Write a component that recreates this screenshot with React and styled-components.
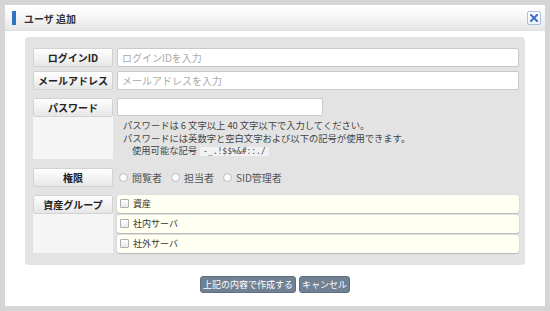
import React from "react";
import styled, { createGlobalStyle } from "styled-components";

const Global = createGlobalStyle`
  html, body { margin: 0; padding: 0; }
  body {
    background: #d5d5d5;
    font-family: "Noto Sans CJK JP", "Noto Sans", sans-serif;
    color: #333;
  }
`;

const Page = styled.div`
  padding: 5px 5px 0 5px;
  height: 311px;
  box-sizing: border-box;
`;

const Dialog = styled.div`
  background: #fff;
  height: 301px;
  display: flex;
  flex-direction: column;
  box-sizing: border-box;
`;

const Header = styled.div`
  height: 24px;
  margin-top: 1px;
  display: flex;
  align-items: center;
  padding: 0 4px 0 7px;
  background: linear-gradient(#ffffff 0%, #f6f6f6 45%, #e6e6e6 100%);
  border-bottom: 1px solid #e0e0e0;
`;

const TitleBar = styled.span`
  width: 4px;
  height: 14px;
  background: #2f74c0;
  margin-right: 8px;
`;

const Title = styled.span`
  font-size: 10px;
  font-weight: bold;
  color: #333;
  flex: 1;
`;

const CloseBtn = styled.button`
  width: 14px;
  height: 14px;
  padding: 0;
  border: 1px solid #a9bfdc;
  border-radius: 2px;
  background: linear-gradient(#ffffff, #eef3fa);
  display: flex;
  align-items: center;
  justify-content: center;
  cursor: pointer;
`;

const Panel = styled.div`
  margin: 6px 20px 0 20px;
  background: #e3e3e3;
  border-radius: 4px;
  padding: 11px 6px 12px 8px;
  display: flex;
  flex-direction: column;
`;

const Row = styled.div`
  display: grid;
  grid-template-columns: 80px 1fr;
  column-gap: 4px;
  margin-top: ${(p) => p.$mt || 0}px;
`;

const LabelCol = styled.div`
  display: flex;
  flex-direction: column;
  background: #f5f5f5;
`;

const Label = styled.div`
  height: 19px;
  box-sizing: border-box;
  display: flex;
  align-items: center;
  justify-content: center;
  font-size: 10px;
  font-weight: bold;
  color: #222;
  background: linear-gradient(#fefefe 0%, #f3f3f3 50%, #e6e6e6 100%);
  border: 1px solid #d2d2d2;
  border-radius: 2px;
`;

const Field = styled.div`
  display: flex;
  flex-direction: column;
`;

const Input = styled.input`
  width: ${(p) => p.$w || "100%"};
  height: ${(p) => p.$h || 19}px;
  box-sizing: border-box;
  border: 1px solid #c9c9c9;
  border-radius: 2px;
  background: #fff;
  padding: 0 4px;
  font-family: inherit;
  font-size: 10px;
  outline: none;
  &::placeholder { color: #aaa; }
`;

const Help = styled.div`
  padding: 3px 0 2px 6px;
  font-size: 9.3px;
  line-height: 12.5px;
  color: #444;
`;

const HelpLine = styled.div`
  height: 12.5px;
  padding-left: ${(p) => p.$indent || 0}px;
  white-space: nowrap;
`;

const Code = styled.code`
  font-family: "DejaVu Sans Mono", "Liberation Mono", monospace;
  font-size: 8px;
  line-height: 10px;
  background: #f2f2f2;
  padding: 0 3px;
  margin-left: 3px;
`;

const Radios = styled.div`
  display: flex;
  align-items: center;
  height: 19px;
  padding-left: 2px;
  gap: 9px;
`;

const RadioItem = styled.label`
  display: flex;
  align-items: center;
  font-size: 10px;
  color: #555;
  gap: 4px;
`;

const RadioDot = styled.span`
  width: 7px;
  height: 7px;
  border-radius: 50%;
  border: 1px solid #bbb;
  background: #fafafa;
`;

const Groups = styled.div`
  display: flex;
  flex-direction: column;
  gap: 2px;
`;

const GroupRow = styled.label`
  height: 18px;
  box-sizing: border-box;
  display: flex;
  align-items: center;
  padding-left: 3px;
  gap: 4px;
  background: #fffff2;
  border-radius: 3px;
  box-shadow: 0 1px 1px #b9b9b9, 0 0 0 1px #dedede;
  font-size: 9px;
  color: #333;
`;

const CheckBox = styled.span`
  width: 7px;
  height: 7px;
  border: 1px solid #b0b0b0;
  border-radius: 1px;
  background: linear-gradient(#ffffff, #e8e8e8);
`;

const Footer = styled.div`
  display: flex;
  justify-content: center;
  gap: 3px;
  margin-top: 11px;
`;

const Btn = styled.button`
  height: 17px;
  padding: 0 2px;
  border: 1px solid #5f6f80;
  border-radius: 3px;
  background: #708193;
  color: #fff;
  font-family: inherit;
  font-size: 9px;
  line-height: 15px;
  cursor: pointer;
`;

export default function App() {
  return (
    <Page>
      <Global />
      <Dialog>
        <Header>
          <TitleBar />
          <Title>ユーザ 追加</Title>
          <CloseBtn aria-label="close">
            <svg width="8" height="8" viewBox="0 0 8 8">
              <path d="M1 1L7 7M7 1L1 7" stroke="#3b6fbf" strokeWidth="2" strokeLinecap="square" />
            </svg>
          </CloseBtn>
        </Header>
        <Panel>
          <Row>
            <Label>ログインID</Label>
            <Input placeholder="ログインIDを入力" />
          </Row>
          <Row $mt={4}>
            <Label>メールアドレス</Label>
            <Input placeholder="メールアドレスを入力" />
          </Row>
          <Row $mt={8}>
            <LabelCol>
              <Label>パスワード</Label>
            </LabelCol>
            <Field>
              <Input type="password" $w="206px" $h={18} />
              <Help>
                <HelpLine>パスワードは 6 文字以上 40 文字以下で入力してください。</HelpLine>
                <HelpLine>パスワードには英数字と空白文字および以下の記号が使用できます。</HelpLine>
                <HelpLine $indent={9}>
                  使用可能な記号<Code>-_.!$$%&amp;#::./</Code>
                </HelpLine>
              </Help>
            </Field>
          </Row>
          <Row $mt={9}>
            <Label>権限</Label>
            <Radios>
              <RadioItem><RadioDot />閲覧者</RadioItem>
              <RadioItem><RadioDot />担当者</RadioItem>
              <RadioItem><RadioDot />SID管理者</RadioItem>
            </Radios>
          </Row>
          <Row $mt={8}>
            <LabelCol>
              <Label>資産グループ</Label>
            </LabelCol>
            <Groups>
              <GroupRow><CheckBox />資産</GroupRow>
              <GroupRow><CheckBox />社内サーバ</GroupRow>
              <GroupRow><CheckBox />社外サーバ</GroupRow>
            </Groups>
          </Row>
        </Panel>
        <Footer>
          <Btn>上記の内容で作成する</Btn>
          <Btn>キャンセル</Btn>
        </Footer>
      </Dialog>
    </Page>
  );
}
